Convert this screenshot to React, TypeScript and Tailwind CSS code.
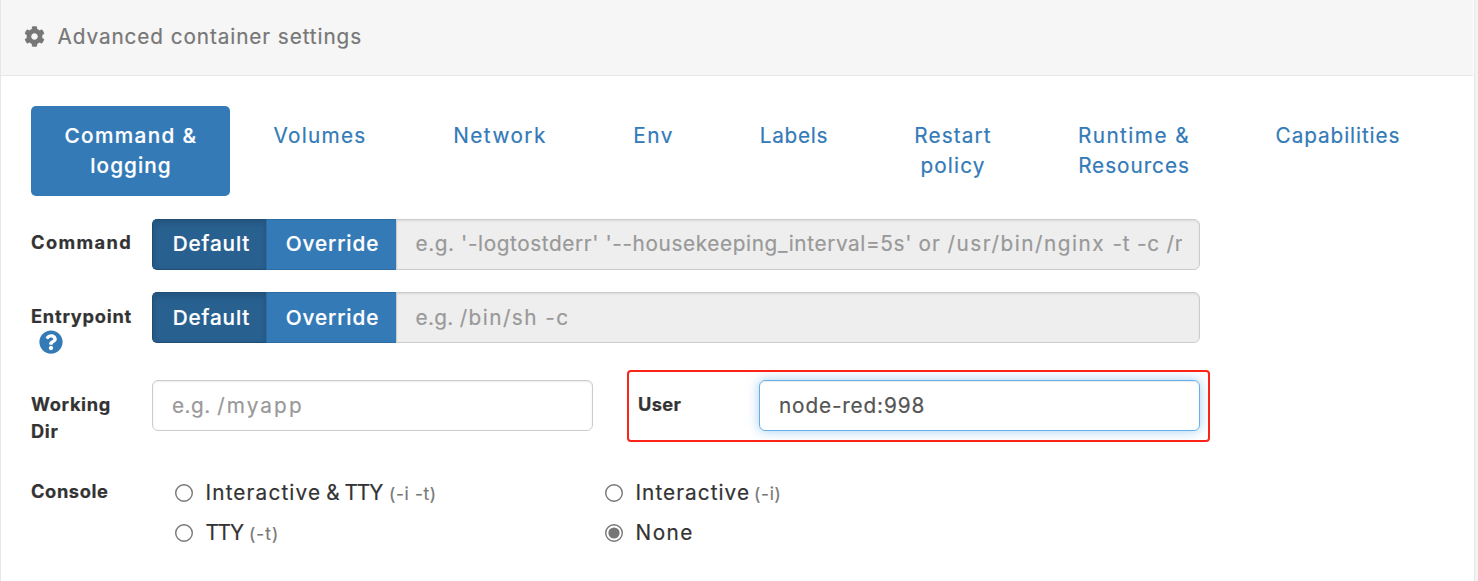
import type { ReactNode } from 'react';
import { FaCog, FaQuestionCircle } from 'react-icons/fa';

function Tab({ className, children }: { className: string; children: ReactNode }) {
  return (
    <a className={`shrink-0 rounded-[5px] py-[15px] text-center ${className}`}>{children}</a>
  );
}

function Label({ className, children }: { className: string; children: ReactNode }) {
  return (
    <div className={`shrink-0 text-[18.25px] leading-[27px] font-bold ${className}`}>{children}</div>
  );
}

function OverrideGroup({ className = '', children }: { className?: string; children: ReactNode }) {
  return (
    <div className={`flex h-[51px] w-[1048px] font-medium text-white ${className}`}>
      <button className="w-[114px] shrink-0 rounded-l-[5px] border border-r-0 border-[#204d74] bg-[#286090] pl-[4px] tracking-[0.85px] shadow-[inset_0_3px_6px_rgba(0,0,0,0.14)]">
        <span className="relative -top-px group-[.low]:top-0">Default</span>
      </button>
      <button className="w-[130px] shrink-0 border border-r-0 border-[#2e6da4] bg-[#337ab7] pl-[2px] tracking-[0.9px]">
        <span className="relative -top-px group-[.low]:top-0">Override</span>
      </button>
      <div className="flex min-w-0 grow items-center rounded-r-[6px] border border-[#cccccc] bg-[#eeeeee] pr-[17px] pl-[18px] font-normal text-[#999999] shadow-[inset_0_1px_2px_rgba(0,0,0,0.09)]">
        <div className="relative -top-px w-full overflow-hidden pl-[0.5px] whitespace-pre group-[.low]:top-0">
          {children}
        </div>
      </div>
    </div>
  );
}

function Radio({ checked = false, children }: { checked?: boolean; children: ReactNode }) {
  return (
    <label className="flex h-[30px] w-[430px] items-center">
      <svg className="mr-3 size-[18px] shrink-0" viewBox="0 0 18 18">
        <circle cx="9" cy="9" r="8.3" fill="#fff" stroke="#767676" strokeWidth="1.4" />
        {checked && <circle cx="9" cy="9" r="5.6" fill="#767676" />}
      </svg>
      <span className="flex items-baseline pl-[0.5px] whitespace-pre">{children}</span>
    </label>
  );
}

export default function App() {
  return (
    <div className="flex h-[581px] w-[1478px] overflow-hidden bg-[#f3f3f3] font-[Inter,sans-serif] text-[20.75px] leading-[30px] text-[#333333] [-webkit-text-stroke:0.2px]">
      <div className="w-[1475px] border-x border-[#e7e7e7] bg-white">
        <header className="mr-[1px] flex h-[76px] items-center border-b border-[#e7e7e7] bg-[#f6f6f6] pb-[2px] pl-[22.5px] text-[#777777]">
          <FaCog className="mr-[13px] mb-[1px] size-[21px]" />
          <h1 className="tracking-[0.9px]">Advanced container settings</h1>
        </header>

        <main className="pl-[30px]">
          <nav className="mt-[30px] flex h-[90px] text-[#337ab7]">
            <Tab className="w-[199px] bg-[#337ab7] pl-[1px] font-medium text-white">
              <span className="block tracking-[1.35px]">Command &amp;</span>
              <span className="block tracking-[1.05px]">logging</span>
            </Tab>
            <Tab className="w-[180px] tracking-[1.25px]">Volumes</Tab>
            <Tab className="w-[180px] tracking-[1.45px]">Network</Tab>
            <Tab className="w-[127px] tracking-[1.5px]">Env</Tab>
            <Tab className="w-[154px] tracking-[0.7px]">Labels</Tab>
            <Tab className="w-[164px] tracking-[1.15px]">
              Restart
              <br />
              policy
            </Tab>
            <Tab className="w-[198px]">
              <span className="block tracking-[1.45px]">Runtime &amp;</span>
              <span className="block tracking-[0.95px]">Resources</span>
            </Tab>
            <Tab className="w-[210px] tracking-[0.9px]">Capabilities</Tab>
          </nav>

          <section className="mt-[23px] flex h-[73px]">
            <Label className="w-[121px] pt-[10px] tracking-[1.4px]">Command</Label>
            <OverrideGroup>
              <span className="tracking-[0.6px]">{"e.g. '-logtostderr' "}</span>
              <span className="tracking-[0.62px]">{"'--housekeeping_interval=5s' "}</span>
              <span className="tracking-[1px]">{'or '}</span>
              <span className="tracking-[1.52px]">{'/usr/bin/nginx '}</span>
              <span className="tracking-[0.75px]">{'-t -c /mynginx.conf'}</span>
            </OverrideGroup>
          </section>

          <section className="group low flex h-[88px]">
            <Label className="w-[121px] pt-[11px] tracking-[0.75px]">
              Entrypoint
              <FaQuestionCircle className="ml-[8px] size-[24px] text-[#337ab7]" />
            </Label>
            <OverrideGroup>
              <span className="tracking-[0.3px]">{'e.g. '}</span>
              <span className="tracking-[1.45px]">/bin/sh -c</span>
            </OverrideGroup>
          </section>

          <section className="relative flex h-[98px]">
            <Label className="w-[121px] pt-[11px] tracking-[0.65px]">
              Working
              <br />
              Dir
            </Label>
            <div className="flex h-[51px] w-[441px] items-center rounded-[6px] border border-[#cccccc] pl-[19px] whitespace-pre text-[#999999] shadow-[inset_0_1px_2px_rgba(0,0,0,0.08)]">
              <span className="tracking-[0.5px]">{'e.g. '}</span>
              <span className="tracking-[2.1px]">/myapp</span>
            </div>
            <Label className="ml-[45px] w-[121px] pt-[11px] tracking-[0.33px]">User</Label>
            <div className="flex h-[51px] w-[441px] items-center rounded-[6px] border border-[#66afe9] pl-[19px] tracking-[0.85px] text-[#555555] shadow-[inset_0_1px_1px_rgba(0,0,0,0.075),0_0_12px_rgba(102,175,233,0.6)]">
              node-red:998
            </div>
            <div className="absolute top-[-10px] left-[596px] h-[72px] w-[583px] rounded-[4px] border-2 border-[#fa2418]" />
          </section>

          <section className="flex">
            <Label className="w-[144px] tracking-[0.6px]">Console</Label>
            <div className="grid grid-cols-[430px_430px] gap-y-[10px]">
              <Radio>
                <span className="tracking-[1.15px]">Interactive</span>
                <span className="ml-[5px]">&amp;</span>
                <span className="ml-[5px] tracking-[-1.3px]">TTY</span>
                <small className="ml-[7px] text-[17.2px] tracking-[0.7px] text-[#777777]">(-i -t)</small>
              </Radio>
              <Radio>
                <span className="tracking-[1.05px]">Interactive</span>
                <small className="ml-[4px] text-[17.2px] tracking-[0.7px] text-[#777777]">(-i)</small>
              </Radio>
              <Radio>
                <span className="tracking-[-1.3px]">TTY</span>
                <small className="ml-[6px] text-[17.2px] tracking-[1.1px] text-[#777777]">(-t)</small>
              </Radio>
              <Radio checked>
                <span className="tracking-[1.5px]">None</span>
              </Radio>
            </div>
          </section>
        </main>
      </div>
    </div>
  );
}
